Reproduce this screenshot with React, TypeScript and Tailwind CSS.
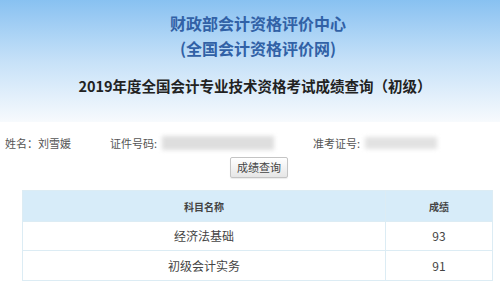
export default function App() {
  return (
    <div className="w-[500px] h-[285px] overflow-hidden bg-white font-['Noto_Sans_CJK_SC',sans-serif]">
      <header className="h-[122px] bg-gradient-to-b from-[#88c1f1] via-[#c6e1f8] to-[#f7fafd] pt-[11px] text-center">
        <div className="pl-[16px] text-[16px] leading-[25px] font-bold text-[#3161a6]">
          <div>财政部会计资格评价中心</div>
          <div>(全国会计资格评价网)</div>
        </div>
        <div className="mt-[15px] pl-[10px] text-[14.5px] leading-[20px] font-bold text-[#222]">
          2019年度全国会计专业技术资格考试成绩查询（初级）
        </div>
      </header>

      <section className="mt-[10px] flex items-center h-[22px] text-[11px] text-[#555]">
        <span className="ml-[5px] w-[105px]">姓名：刘雪媛</span>
        <span>证件号码:</span>
        <span className="ml-[5px] w-[112px] h-[14px] bg-[#dedede] blur-[2px]" />
        <span className="ml-[39px]">准考证号:</span>
        <span className="ml-[5px] w-[72px] h-[12px] bg-[#e2e2e2] blur-[2px]" />
      </section>

      <div className="flex justify-center mt-[3px]">
        <button className="ml-[18px] h-[21px] px-[6px] text-[11px] text-[#444] border border-[#c4c4c4] rounded-[2px] bg-gradient-to-b from-white to-[#e6e6e6] shadow-[0_1px_1px_rgba(0,0,0,0.08)]">
          成绩查询
        </button>
      </div>

      <table className="ml-[22px] mt-[12px] w-[471px] border-collapse border border-[#dcecf4] text-[#444]">
        <thead>
          <tr className="h-[31px] bg-[#d7ecf9] text-[10px] font-bold">
            <th className="border border-[#dcecf4] font-bold">科目名称</th>
            <th className="w-[107px] border border-[#dcecf4] font-bold">成绩</th>
          </tr>
        </thead>
        <tbody className="text-[12px]">
          <tr className="h-[29px]">
            <td className="border border-[#dcecf4] text-center">经济法基础</td>
            <td className="border border-[#dcecf4] text-center">93</td>
          </tr>
          <tr className="h-[30px]">
            <td className="border border-[#dcecf4] text-center">初级会计实务</td>
            <td className="border border-[#dcecf4] text-center">91</td>
          </tr>
        </tbody>
      </table>
    </div>
  );
}
